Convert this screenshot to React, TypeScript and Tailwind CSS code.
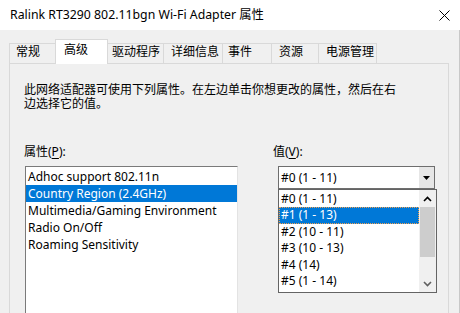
import React from 'react';

const tabs = [
  { label: '常规', cls: 'w-[49px] pl-[6px]', active: false },
  { label: '高级', cls: 'w-[53px] -ml-[3px] pl-[8px]', active: true },
  { label: '驱动程序', cls: 'w-[57px] -ml-px pl-[4px]', active: false },
  { label: '详细信息', cls: 'w-[60px] -ml-px pl-[7px]', active: false },
  { label: '事件', cls: 'w-[50px] -ml-px pl-[5px]', active: false },
  { label: '资源', cls: 'w-[48px] -ml-px pl-[7px]', active: false },
  { label: '电源管理', cls: 'w-[59px] -ml-px pl-[7px]', active: false },
];

const properties = [
  'Adhoc support 802.11n',
  'Country Region (2.4GHz)',
  'Multimedia/Gaming Environment',
  'Radio On/Off',
  'Roaming Sensitivity',
];

const values = ['#0 (1 - 11)', '#1 (1 - 13)', '#2 (10 - 11)', '#3 (10 - 13)', '#4 (14)', '#5 (1 - 14)'];

function CloseIcon() {
  return (
    <svg width="11" height="11" viewBox="0 0 11 11" className="block">
      <path d="M0.5 0.5 L10.5 10.5 M10.5 0.5 L0.5 10.5" stroke="#000" strokeWidth="1" fill="none" />
    </svg>
  );
}

export default function App() {
  return (
    <div className="w-[460px] h-[313px] overflow-hidden bg-[#f0f0f0] flex flex-col text-black text-[12px] font-['Noto_Sans','Noto_Sans_CJK_SC',sans-serif]">
      {/* title bar */}
      <div className="h-[30px] bg-white flex items-center justify-between pl-[10px] pr-[10px] shrink-0">
        <span className="text-[12.3px] leading-[16px] whitespace-nowrap">Ralink RT3290 802.11bgn Wi-Fi Adapter 属性</span>
        <CloseIcon />
      </div>

      <div className="flex-1 flex flex-col pl-[9px] pr-[10px] pt-[9px] border-r border-[#c8c8c8]">
        {/* tabs */}
        <div className="h-[24px] flex items-end shrink-0">
          {tabs.map((t) => (
            <div
              key={t.label}
              className={
                t.active
                  ? `${t.cls} h-[25px] -mb-px relative z-10 bg-white border-l border-t border-r border-[#d9d9d9] pt-[2px] leading-[16px] whitespace-nowrap`
                  : `${t.cls} h-[20px] bg-[#f0f0f0] border-l border-t border-r border-[#d9d9d9] leading-[16px] whitespace-nowrap`
              }
            >
              {t.label}
            </div>
          ))}
        </div>

        {/* page */}
        <div className="flex-1 border border-[#d9d9d9] bg-[#f0f0f0] pl-[14px] pt-[19px]">
          <p className="leading-[14px] whitespace-nowrap">
            此网络适配器可使用下列属性。在左边单击你想更改的属性，然后在右
            <br />
            边选择它的值。
          </p>

          <div className="flex mt-[34px]">
            {/* property list */}
            <div className="w-[214px] flex flex-col">
              <div className="leading-[14px] h-[14px]">
                属性(<span className="underline underline-offset-2">P</span>):
              </div>
              <div className="mt-[7px] ml-px h-[160px] bg-white border border-[#7a7a7a] border-r-[#e3e3e3] pt-px">
                {properties.map((p, i) => (
                  <div
                    key={p}
                    className={
                      i === 1
                        ? 'h-[17px] leading-[17px] pl-[2px] bg-[#0078d7] text-white whitespace-nowrap'
                        : 'h-[17px] leading-[17px] pl-[2px] whitespace-nowrap'
                    }
                  >
                    {p}
                  </div>
                ))}
              </div>
            </div>

            {/* value */}
            <div className="ml-[35px] flex flex-col">
              <div className="leading-[14px] h-[14px]">
                值(<span className="underline underline-offset-2">V</span>):
              </div>
              <div className="mt-[7px] ml-[5px] relative">
                <div className="w-[157px] h-[23px] bg-white border border-[#6e6e6e] flex items-center">
                  <span className="flex-1 pl-[2px] leading-[17px] whitespace-nowrap">#0 (1 - 11)</span>
                  <div className="w-[15px] h-[21px] bg-[#e6e6e6] flex items-center justify-center">
                    <svg width="7" height="4" viewBox="0 0 7 4" className="block">
                      <path d="M0 0 H7 L3.5 4 Z" fill="#000" />
                    </svg>
                  </div>
                </div>

                {/* open dropdown */}
                <div className="absolute left-0 top-[23px] w-[159px] h-[104px] bg-white border border-[#646464] flex z-20">
                  <div className="flex-1 flex flex-col pt-[0.5px]">
                    {values.map((v, i) => (
                      <div
                        key={v}
                        className={
                          i === 1
                            ? 'h-[16.6px] leading-[16.6px] pl-[2px] bg-[#0078d7] text-white whitespace-nowrap outline-1 outline-dotted outline-[#f0a050] -outline-offset-1'
                            : 'h-[16.6px] leading-[16.6px] pl-[2px] whitespace-nowrap'
                        }
                      >
                        {v}
                      </div>
                    ))}
                  </div>
                  <div className="w-[17px] bg-[#f0f0f0] flex flex-col">
                    <div className="h-[17px] flex items-center justify-center">
                      <svg width="9" height="6" viewBox="0 0 9 6" className="block">
                        <path d="M1 5 L4.5 1.5 L8 5" stroke="#000" strokeWidth="1.6" fill="none" />
                      </svg>
                    </div>
                    <div className="h-[50px] mx-px bg-[#cdcdcd]" />
                    <div className="flex-1" />
                    <div className="h-[17px] flex items-center justify-center">
                      <svg width="9" height="6" viewBox="0 0 9 6" className="block">
                        <path d="M1 1 L4.5 4.5 L8 1" stroke="#606060" strokeWidth="1.6" fill="none" />
                      </svg>
                    </div>
                  </div>
                </div>
              </div>
            </div>
          </div>
        </div>
      </div>
    </div>
  );
}
